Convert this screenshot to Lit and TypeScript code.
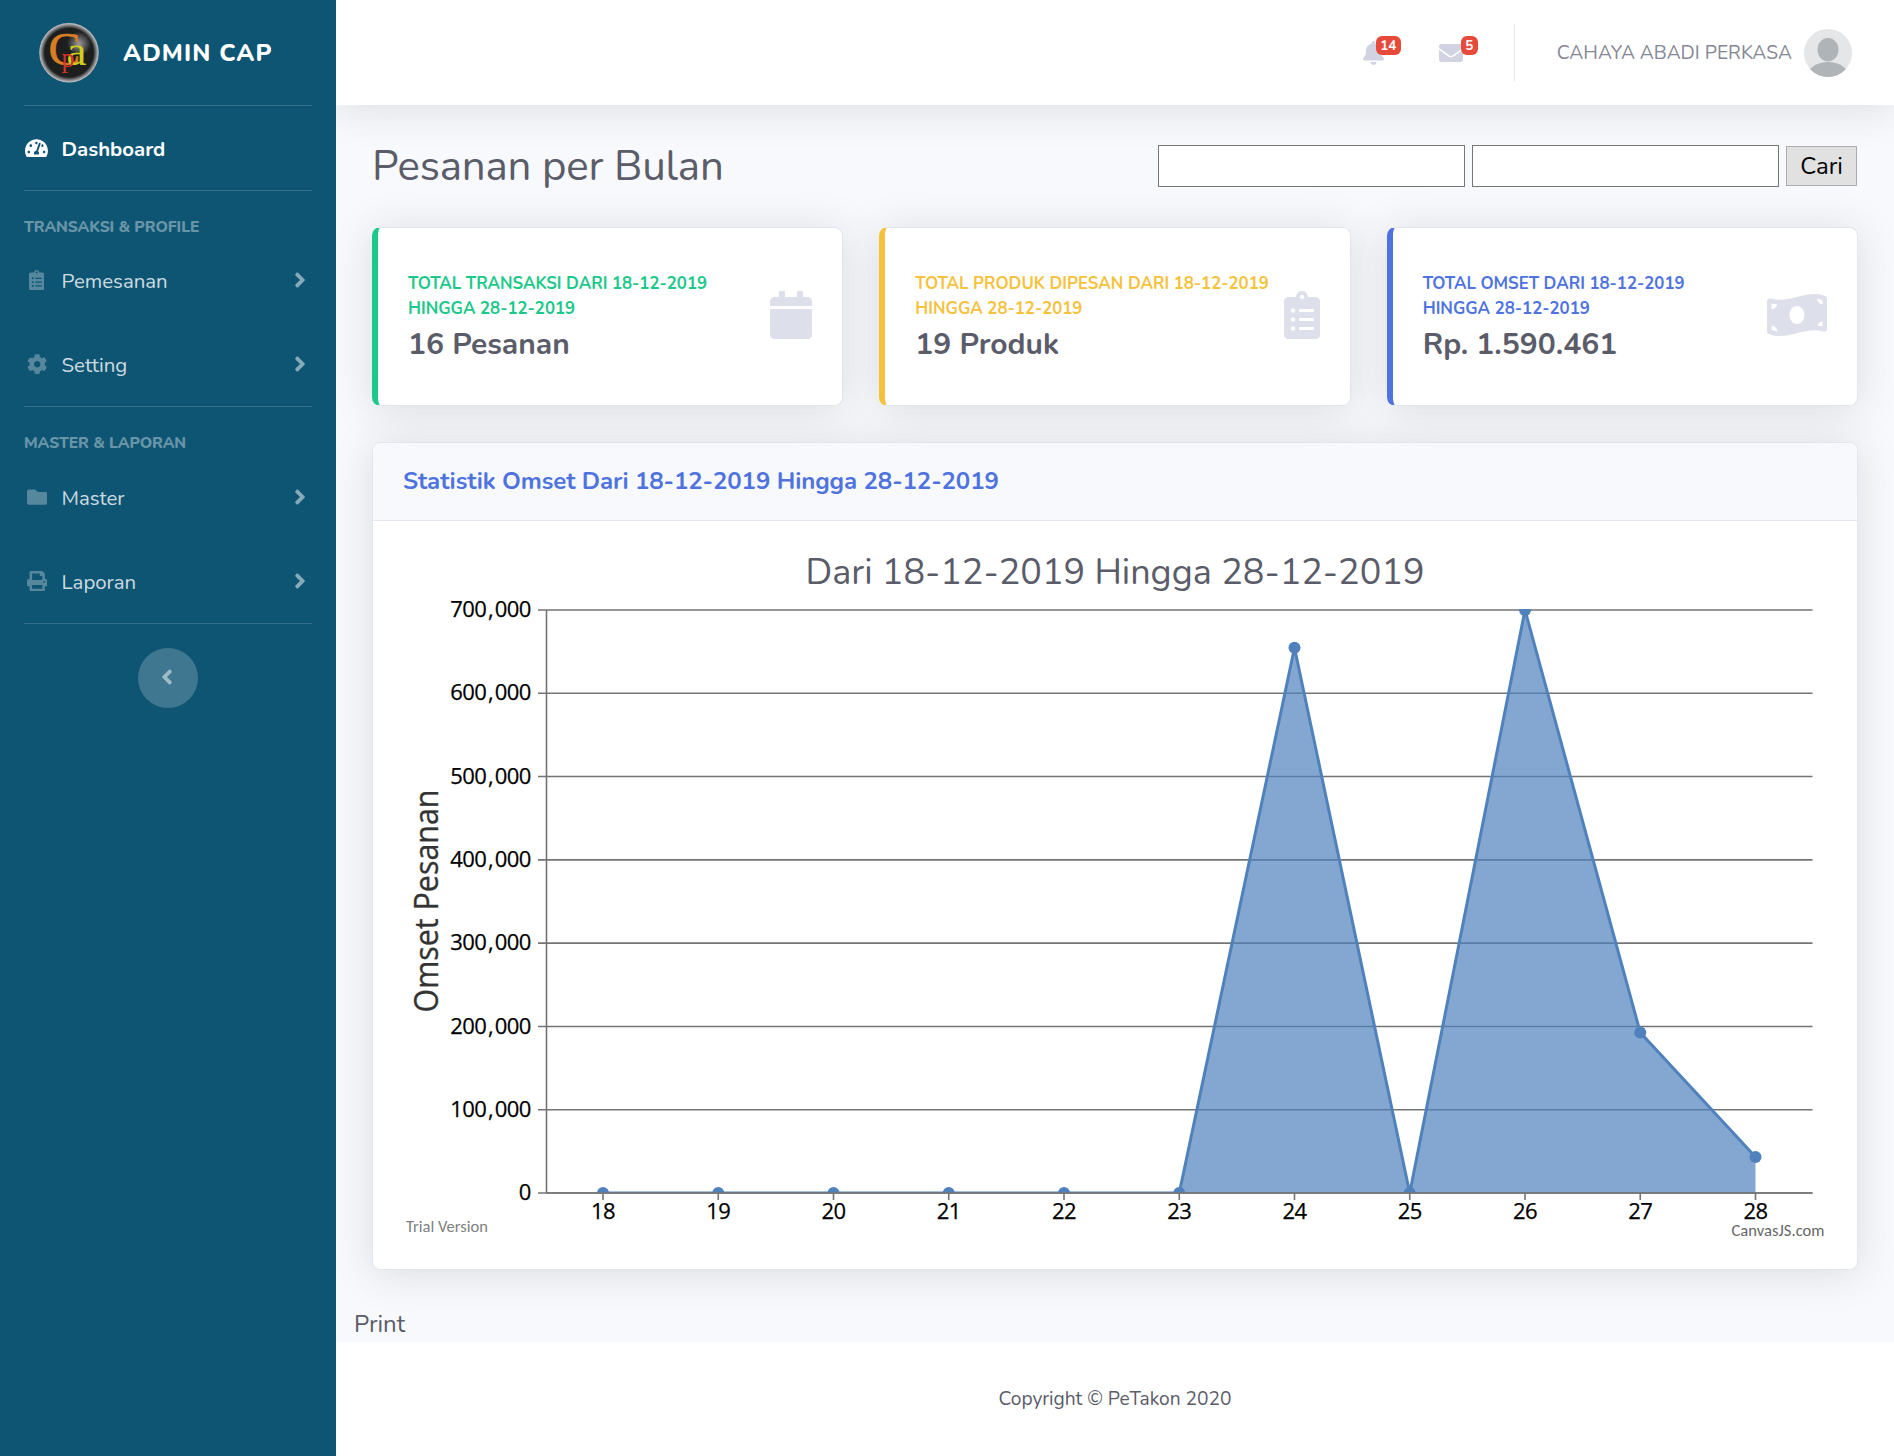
import { LitElement, html, svg, css } from 'lit';
import { customElement, property } from 'lit/decorators.js';
import { classMap } from 'lit/directives/class-map.js';

const ICONS: Record<string, { w: number; d: string }> = {
  gauge: { w: 576, d: 'M288 32C128.94 32 0 160.94 0 320c0 52.8 14.25 102.26 39.06 144.8 5.61 9.62 16.3 15.2 27.44 15.2h443c11.14 0 21.83-5.58 27.44-15.2C561.75 422.26 576 372.8 576 320c0-159.06-128.94-288-288-288zm0 64c14.71 0 26.58 10.13 30.32 23.65-1.11 2.26-2.64 4.23-3.45 6.67l-9.22 27.67c-5.13 3.49-10.97 6.01-17.64 6.01-17.67 0-32-14.33-32-32S270.33 96 288 96zM96 384c-17.67 0-32-14.33-32-32s14.33-32 32-32 32 14.33 32 32-14.33 32-32 32zm48-160c-17.67 0-32-14.33-32-32s14.33-32 32-32 32 14.33 32 32-14.33 32-32 32zm246.77-72.41l-61.33 184C343.13 347.33 352 364.54 352 384c0 11.72-3.38 22.55-8.88 32H232.88c-5.5-9.45-8.88-20.28-8.88-32 0-33.94 26.5-61.43 59.9-63.59l61.34-184.01c4.17-12.56 17.73-19.45 30.36-15.17 12.57 4.19 19.35 17.79 15.17 30.36zm14.66 57.2l15.52-46.55c3.47-1.29 7.13-2.23 11.05-2.23 17.67 0 32 14.33 32 32s-14.33 32-32 32c-11.38-.01-20.89-6.28-26.57-15.22zM480 384c-17.67 0-32-14.33-32-32s14.33-32 32-32 32 14.33 32 32-14.33 32-32 32z' },
  clipboard: { w: 384, d: 'M336 64h-80c0-35.3-28.7-64-64-64s-64 28.7-64 64H48C21.5 64 0 85.5 0 112v352c0 26.5 21.5 48 48 48h288c26.5 0 48-21.5 48-48V112c0-26.5-21.5-48-48-48zM96 424c-13.3 0-24-10.7-24-24s10.7-24 24-24 24 10.7 24 24-10.7 24-24 24zm0-96c-13.3 0-24-10.7-24-24s10.7-24 24-24 24 10.7 24 24-10.7 24-24 24zm0-96c-13.3 0-24-10.7-24-24s10.7-24 24-24 24 10.7 24 24-10.7 24-24 24zm96-192c13.3 0 24 10.7 24 24s-10.7 24-24 24-24-10.7-24-24 10.7-24 24-24zm128 368c0 4.4-3.6 8-8 8H168c-4.4 0-8-3.6-8-8v-16c0-4.4 3.6-8 8-8h144c4.4 0 8 3.6 8 8v16zm0-96c0 4.4-3.6 8-8 8H168c-4.4 0-8-3.6-8-8v-16c0-4.4 3.6-8 8-8h144c4.4 0 8 3.6 8 8v16zm0-96c0 4.4-3.6 8-8 8H168c-4.4 0-8-3.6-8-8v-16c0-4.4 3.6-8 8-8h144c4.4 0 8 3.6 8 8v16z' },
  cog: { w: 512, d: 'M487.4 315.7l-42.6-24.6c4.3-23.2 4.3-47 0-70.2l42.6-24.6c4.9-2.8 7.1-8.6 5.5-14-11.1-35.6-30-67.8-54.7-94.6-3.8-4.1-10-5.1-14.8-2.3L380.8 110c-17.9-15.4-38.5-27.3-60.8-35.1V25.8c0-5.6-3.9-10.5-9.4-11.7-36.7-8.2-74.3-7.8-109.2 0-5.5 1.2-9.4 6.1-9.4 11.7V75c-22.2 7.9-42.8 19.8-60.8 35.1L88.7 85.5c-4.9-2.8-11-1.9-14.8 2.3-24.7 26.7-43.6 58.9-54.7 94.6-1.7 5.4.6 11.2 5.5 14L67.3 221c-4.3 23.2-4.3 47 0 70.2l-42.6 24.6c-4.9 2.8-7.1 8.6-5.5 14 11.1 35.6 30 67.8 54.7 94.6 3.8 4.1 10 5.1 14.8 2.3l42.6-24.6c17.9 15.4 38.5 27.3 60.8 35.1v49.2c0 5.6 3.9 10.5 9.4 11.7 36.7 8.2 74.3 7.8 109.2 0 5.5-1.2 9.4-6.1 9.4-11.7v-49.2c22.2-7.9 42.8-19.8 60.8-35.1l42.6 24.6c4.9 2.8 11 1.9 14.8-2.3 24.7-26.7 43.6-58.9 54.7-94.6 1.5-5.5-.7-11.3-5.6-14.1zM256 336c-44.1 0-80-35.9-80-80s35.9-80 80-80 80 35.9 80 80-35.9 80-80 80z' },
  folder: { w: 512, d: 'M464 128H272l-64-64H48C21.49 64 0 85.49 0 112v288c0 26.51 21.49 48 48 48h416c26.51 0 48-21.49 48-48V176c0-26.51-21.49-48-48-48z' },
  print: { w: 512, d: 'M448 192V77.25c0-8.49-3.37-16.62-9.37-22.63L393.37 9.37c-6-6-14.14-9.37-22.63-9.37H96C78.33 0 64 14.33 64 32v160c-35.35 0-64 28.65-64 64v112c0 8.84 7.16 16 16 16h48v96c0 17.67 14.33 32 32 32h320c17.67 0 32-14.33 32-32v-96h48c8.84 0 16-7.16 16-16V256c0-35.35-28.65-64-64-64zm-64 256H128v-96h256v96zm0-224H128V64h192v48c0 8.84 7.16 16 16 16h48v96zm48 72c-13.25 0-24-10.75-24-24 0-13.26 10.75-24 24-24s24 10.74 24 24c0 13.25-10.75 24-24 24z' },
  right: { w: 256, d: 'M224.3 273l-136 136c-9.4 9.4-24.6 9.4-33.9 0l-22.6-22.6c-9.4-9.4-9.4-24.6 0-33.9l96.4-96.4-96.4-96.4c-9.4-9.4-9.4-24.6 0-33.9L54.3 103c9.4-9.4 24.6-9.4 33.9 0l136 136c9.5 9.4 9.5 24.6.1 34z' },
  left: { w: 256, d: 'M31.7 239l136-136c9.4-9.4 24.6-9.4 33.9 0l22.6 22.6c9.4 9.4 9.4 24.6 0 33.9L127.9 256l96.4 96.4c9.4 9.4 9.4 24.6 0 33.9L201.7 409c-9.4 9.4-24.6 9.4-33.9 0l-136-136c-9.5-9.4-9.5-24.6-.1-34z' },
  bell: { w: 448, d: 'M224 512c35.32 0 63.97-28.65 63.97-64H160.03c0 35.35 28.65 64 63.97 64zm215.39-149.71c-19.32-20.76-55.47-51.99-55.47-154.29 0-77.7-54.48-139.9-127.94-155.16V32c0-17.67-14.32-32-31.98-32s-31.98 14.33-31.98 32v20.84C118.56 68.1 64.08 130.3 64.08 208c0 102.3-36.15 133.53-55.47 154.29-6 6.45-8.66 14.16-8.61 21.71.11 16.4 12.98 32 32.1 32h383.8c19.12 0 32-15.6 32.1-32 .05-7.55-2.61-15.27-8.61-21.71z' },
  envelope: { w: 512, d: 'M502.3 190.8c3.9-3.1 9.7-.2 9.7 4.7V400c0 26.5-21.5 48-48 48H48c-26.5 0-48-21.5-48-48V195.6c0-5 5.7-7.8 9.7-4.7 22.4 17.4 52.1 39.5 154.1 113.6 21.1 15.4 56.7 47.8 92.2 47.6 35.7.3 72-32.8 92.3-47.6 102-74.1 131.6-96.3 154-113.7zM256 320c23.2.4 56.6-29.2 73.4-41.4 132.7-96.3 142.8-104.7 173.4-128.7 5.8-4.5 9.2-11.5 9.2-18.9v-19c0-26.5-21.5-48-48-48H48c-26.5 0-48 21.5-48 48v19c0 7.4 3.4 14.3 9.2 18.9 30.6 23.9 40.7 32.4 173.4 128.7 16.8 12.2 50.2 41.8 73.4 41.4z' },
  calendar: { w: 448, d: 'M12 192h424c6.6 0 12 5.4 12 12v260c0 26.5-21.5 48-48 48H48c-26.5 0-48-21.5-48-48V204c0-6.6 5.4-12 12-12zm436-44v-36c0-26.5-21.5-48-48-48h-48V12c0-6.6-5.4-12-12-12h-40c-6.6 0-12 5.4-12 12v52H160V12c0-6.6-5.4-12-12-12h-40c-6.6 0-12 5.4-12 12v52H48C21.5 64 0 85.5 0 112v36c0 6.6 5.4 12 12 12h424c6.6 0 12-5.4 12-12z' },
  money: { w: 640, d: 'M621.16 54.46C582.37 38.19 543.55 32 504.75 32c-123.17-.01-246.33 62.34-369.5 62.34-30.89 0-61.76-3.92-92.65-13.72-3.47-1.1-6.95-1.62-10.35-1.62C15.04 79 0 92.32 0 110.81v317.26c0 12.63 7.23 24.6 18.84 29.46C57.63 473.81 96.45 480 135.25 480c123.17 0 246.34-62.35 369.51-62.35 30.89 0 61.76 3.92 92.65 13.72 3.47 1.1 6.95 1.62 10.35 1.62 17.21 0 32.25-13.32 32.25-31.81V83.93c-.01-12.64-7.24-24.6-18.85-29.47zM48 132.22c20.12 5.04 41.12 7.57 62.72 8.93C104.84 170.54 79 192.69 48 192.69v-60.47zm0 285v-47.78c34.37 0 62.18 27.27 63.71 61.4-22.53-1.81-43.59-6.31-63.71-13.62zM320 352c-44.19 0-80-42.99-80-96 0-53.02 35.82-96 80-96s80 42.98 80 96c0 53.03-35.83 96-80 96zm272 27.78c-17.52-4.39-35.71-6.85-54.32-8.44 5.87-26.08 27.5-45.88 54.32-49.28v57.72zm0-236.11c-30.89-3.91-54.86-29.7-55.81-61.55 19.54 2.17 38.09 6.23 55.81 12.66v48.89z' },
};

/** Glyph drawn 1em tall in the current colour. */
@customElement('app-icon')
export class AppIcon extends LitElement {
  @property() name = 'cog';

  static styles = css`
    :host { display: block; line-height: 0; }
    .glyph { height: 1em; display: block; fill: currentColor; }
  `;

  render() {
    const icon = ICONS[this.name];
    return html`<svg class="glyph" viewBox="0 0 ${icon.w} 512">${svg`<path d=${icon.d}></path>`}</svg>`;
  }
}

@customElement('side-bar')
export class SideBar extends LitElement {
  static styles = css`
    :host {
      display: flex;
      flex-direction: column;
      width: 336px;
      flex: none;
      background: #0e5573;
      color: #fff;
      font-family: Nunito, Lato, sans-serif;
    }
    .brand { display: flex; align-items: center; height: 105px; padding-left: 39px; gap: 24px; }
    .logo { width: 60px; height: 60px; flex: none; }
    .name { font-size: 24px; font-weight: 800; letter-spacing: 1.1px; }
    .rule { height: 1px; margin: 0 24px; background: rgba(255, 255, 255, 0.15); }
    .link { display: flex; align-items: center; height: 84px; padding: 0 30px 0 24px; font-size: 20.4px; }
    .slot { width: 25.5px; display: flex; justify-content: center; color: rgba(255, 255, 255, 0.3); }
    .label { margin-left: 12px; flex: 1; padding-top: 2px; color: rgba(255, 255, 255, 0.8); }
    .link.active .slot, .link.active .label { color: #fff; }
    .link.active .label { font-weight: 700; }
    .arrow { font-size: 24px; color: rgba(255, 255, 255, 0.5); padding-bottom: 1px; }
    .heading {
      margin-top: 25px;
      padding: 0 24px;
      font-size: 15.6px;
      line-height: 23px;
      font-weight: 800;
      letter-spacing: -0.05px;
      color: rgba(255, 255, 255, 0.4);
    }
    .heading.first { margin-bottom: -1px; }
    .toggle {
      width: 60px;
      height: 60px;
      margin: 24px auto 0;
      border-radius: 50%;
      background: rgba(255, 255, 255, 0.2);
      display: flex;
      align-items: center;
      justify-content: center;
      font-size: 24px;
      color: rgba(255, 255, 255, 0.5);
    }
    .toggle app-icon { padding: 0 2px 2px 0; }
    .mark { font-family: "Liberation Serif", serif; stroke-width: 0.6; }
    .c { fill: #d97d25; stroke: #d97d25; }
    .p { fill: #d8302a; }
    .a { fill: #cfcf1c; }
  `;

  private link(icon: string, label: string, active = false) {
    return html`
      <div class=${classMap({ link: true, active })}>
        <span class="slot"><app-icon name=${icon}></app-icon></span>
        <span class="label">${label}</span>
        ${active ? '' : html`<app-icon class="arrow" name="right"></app-icon>`}
      </div>`;
  }

  render() {
    return html`
      <div class="brand">
        <svg class="logo" viewBox="0 0 60 60">
          <defs>
            <radialGradient id="rim" cx="50%" cy="50%" r="50%">
              <stop offset="0.82" stop-color="#1d1f1e"></stop>
              <stop offset="0.93" stop-color="#8a898c"></stop>
              <stop offset="1" stop-color="#c9c8cb"></stop>
            </radialGradient>
            <radialGradient id="shine" cx="70%" cy="32%" r="24%">
              <stop offset="0" stop-color="#9a9a9a"></stop>
              <stop offset="1" stop-color="#9a9a9a" stop-opacity="0"></stop>
            </radialGradient>
          </defs>
          <circle cx="30" cy="29.7" r="29.7" fill="url(#rim)"></circle>
          <circle cx="30" cy="29.7" r="25" fill="url(#shine)"></circle>
          <text class="mark c" x="9.5" y="42" font-size="46" textLength="32" lengthAdjust="spacingAndGlyphs">C</text>
          <text class="mark a" x="27.5" y="42" font-size="43" textLength="20" lengthAdjust="spacingAndGlyphs">a</text>
          <text class="mark p" x="22.5" y="43.5" font-size="28" textLength="13" lengthAdjust="spacingAndGlyphs">p</text>
        </svg>
        <span class="name">ADMIN CAP</span>
      </div>
      <div class="rule"></div>
      ${this.link('gauge', 'Dashboard', true)}
      <div class="rule"></div>
      <div class="heading first">TRANSAKSI &amp; PROFILE</div>
      ${this.link('clipboard', 'Pemesanan')}
      ${this.link('cog', 'Setting')}
      <div class="rule"></div>
      <div class="heading">MASTER &amp; LAPORAN</div>
      ${this.link('folder', 'Master')}
      ${this.link('print', 'Laporan')}
      <div class="rule"></div>
      <div class="toggle"><app-icon name="left"></app-icon></div>
    `;
  }
}

@customElement('top-bar')
export class TopBar extends LitElement {
  static styles = css`
    :host {
      display: flex;
      align-items: center;
      justify-content: flex-end;
      height: 105px;
      box-sizing: border-box;
      padding-right: 42px;
      background: #fff;
      box-shadow: 0 3.6px 42px rgba(58, 59, 69, 0.15);
      font-family: Nunito, Lato, sans-serif;
      color: #d1d3e2;
      font-size: 24px;
    }
    .alert { position: relative; margin-right: 55px; }
    .alert.mail { margin-right: 51px; }
    .badge {
      position: absolute;
      top: -5px;
      left: 13px;
      height: 19px;
      width: 25px;
      border-radius: 6px;
      background: #e74a3b;
      color: #fff;
      font-size: 13.5px;
      line-height: 19px;
      font-weight: 700;
      text-align: center;
    }
    .mail .badge { left: 22px; width: 17px; }
    .divider { width: 1px; height: 57px; background: #e3e6f0; margin-right: 42px; }
    .user { font-size: 19.2px; color: #858796; margin-right: 12px; }
    .avatar { width: 48px; height: 48px; display: block; }
  `;

  render() {
    return html`
      <div class="alert"><app-icon name="bell"></app-icon><span class="badge">14</span></div>
      <div class="alert mail"><app-icon name="envelope"></app-icon><span class="badge">5</span></div>
      <div class="divider"></div>
      <span class="user">CAHAYA ABADI PERKASA</span>
      <svg class="avatar" viewBox="0 0 48 48">
        <defs><clipPath id="round"><circle cx="24" cy="24" r="24"></circle></clipPath></defs>
        <g clip-path="url(#round)">
          <rect width="48" height="48" fill="#e4e6e8"></rect>
          <ellipse cx="24" cy="20.7" rx="10.5" ry="11.7" fill="#aeb4b8"></ellipse>
          <ellipse cx="24" cy="46" rx="20" ry="13" fill="#aeb4b8"></ellipse>
        </g>
      </svg>
    `;
  }
}

@customElement('stat-card')
export class StatCard extends LitElement {
  @property() tone = 'success';
  @property() title = '';
  @property() range = '';
  @property() value = '';
  @property() icon = '';

  static styles = css`
    :host { display: block; }
    .card {
      display: flex;
      align-items: center;
      justify-content: space-between;
      height: 179px;
      box-sizing: border-box;
      padding: 0 30px;
      background: #fff;
      border: 1px solid #e3e6f0;
      border-left: 6px solid var(--tone);
      border-radius: 8.4px;
      box-shadow: 0 3.6px 42px rgba(58, 59, 69, 0.15);
      font-family: Nunito, Lato, sans-serif;
      font-weight: 700;
    }
    .success { --tone: #1cc88a; }
    .warning { --tone: #f6c23e; }
    .primary { --tone: #4e73df; }
    .caption { color: var(--tone); font-size: 16.8px; line-height: 25.2px; margin-bottom: 6px; padding-top: 1px; white-space: nowrap; }
    .value { color: #5a5c69; font-size: 30px; line-height: 36px; }
    app-icon { font-size: 48px; color: #dddfeb; padding-bottom: 3px; }
  `;

  render() {
    return html`
      <div class="card ${this.tone}">
        <div>
          <div class="caption">${this.title}<br />${this.range}</div>
          <div class="value">${this.value}</div>
        </div>
        <app-icon name=${this.icon}></app-icon>
      </div>`;
  }
}

const SALES = [
  { day: 18, total: 0 }, { day: 19, total: 0 }, { day: 20, total: 0 }, { day: 21, total: 0 },
  { day: 22, total: 0 }, { day: 23, total: 0 }, { day: 24, total: 654600 }, { day: 25, total: 0 },
  { day: 26, total: 699900 }, { day: 27, total: 192600 }, { day: 28, total: 43300 },
];

@customElement('sales-chart')
export class SalesChart extends LitElement {
  static styles = css`
    :host { display: block; }
    .chart { display: block; width: 1424px; height: 688px; overflow: visible; }
    .title { font: 36px Nunito, Lato, sans-serif; fill: #5a5c69; }
    .tick { font: 22px "Trebuchet MS", "Open Sans", sans-serif; letter-spacing: -0.6px; fill: #000; stroke: #000; stroke-width: 0.25; }
    .axis-name { font: 33px "Trebuchet MS", "Open Sans", sans-serif; fill: #333; stroke: #333; stroke-width: 0.3; }
    .note { font: 16.5px Calibri, Carlito, Lato, sans-serif; fill: #808080; }
    .credit { fill: #666; }
    .grid { stroke: #747474; stroke-width: 1.6; }
    .area { fill: #4f81bc; fill-opacity: 0.7; }
    .line { fill: none; stroke: #4f81bc; stroke-width: 3; stroke-linejoin: round; }
    .dot { fill: #4f81bc; }
  `;

  private level(value: number) {
    const [head, tail] = value.toLocaleString('en-US').split(',');
    return tail ? svg`${head}<tspan dx="1.8">,</tspan><tspan dx="1.8">${tail}</tspan>` : head;
  }

  render() {
    const left = 143.5, right = 1409.5, top = 59, bottom = 642;
    const x = (i: number) => 200 + i * 115.25;
    const y = (v: number) => bottom - (v / 700000) * (bottom - top);
    const points = SALES.map((s, i) => `${x(i)},${y(s.total)}`).join(' ');
    const levels = [0, 1, 2, 3, 4, 5, 6, 7].map((n) => n * 100000);
    return html`
      <svg class="chart" viewBox="0 0 1424 688">
        <defs><clipPath id="plot"><rect x=${left} y=${top - 1} width=${right - left} height=${bottom - top + 1}></rect></clipPath></defs>
        <text class="title" x="712" y="32.7" text-anchor="middle">Dari 18-12-2019 Hingga 28-12-2019</text>
        ${levels.map((v) => svg`
          <line class="grid" x1="135" x2=${right} y1=${y(v)} y2=${y(v)}></line>
          <text class="tick" x="127.8" y=${y(v) + 7.2} text-anchor="end">${this.level(v)}</text>`)}
        <line class="grid" x1=${left} x2=${left} y1=${top} y2=${bottom}></line>
        ${SALES.map((s, i) => svg`
          <line class="grid" x1=${x(i)} x2=${x(i)} y1=${bottom} y2=${bottom + 7}></line>
          <text class="tick" x=${x(i)} y=${bottom + 26} text-anchor="middle">${s.day}</text>`)}
        <g clip-path="url(#plot)">
          <polygon class="area" points="${x(0)},${bottom} ${points} ${x(10)},${bottom}"></polygon>
          <polyline class="line" points=${points}></polyline>
          ${SALES.map((s, i) => svg`<circle class="dot" cx=${x(i)} cy=${y(s.total)} r="6"></circle>`)}
        </g>
        <line class="grid" x1=${left} x2=${right} y1=${bottom} y2=${bottom}></line>
        <text class="axis-name" transform="translate(34.5 461.5) rotate(-90)" textLength="223" lengthAdjust="spacingAndGlyphs">Omset Pesanan</text>
        <text class="note" x="3" y="680.5" textLength="82">Trial Version</text>
        <text class="note credit" x="1328.5" y="685" textLength="93">CanvasJS.com</text>
      </svg>`;
  }
}

@customElement('app-root')
export class AppRoot extends LitElement {
  static styles = css`
    :host { display: flex; height: 1456px; font-family: Nunito, Lato, sans-serif; color: #5a5c69; }
    .wrapper { flex: 1; display: flex; flex-direction: column; overflow: hidden; background: #f8f9fc; }
    .content { flex: none; padding: 36px 36px 0; }
    .head { display: flex; align-items: center; justify-content: space-between; height: 50px; margin-bottom: 36px; padding-right: 1px; }
    .title { margin: 0; padding-top: 1px; font-size: 42px; font-weight: 400; line-height: 50px; letter-spacing: -0.17px; }
    .search { display: flex; align-items: center; gap: 7px; }
    .field { width: 307px; height: 42px; box-sizing: border-box; border: 1px solid #767676; background: #fff; padding: 0 3px; border-radius: 0; outline: none; }
    .submit { width: 71px; height: 40px; box-sizing: border-box; padding: 0; border: 1px solid #adadad; border-radius: 0; background: #e1e1e1; color: #000; font: 24px Nunito, Lato, sans-serif; }
    .cards { display: grid; grid-template-columns: repeat(3, 1fr); gap: 36px; margin-bottom: 36px; }
    .panel { background: #fff; border: 1px solid #e3e6f0; border-radius: 8.4px; box-shadow: 0 3.6px 42px rgba(58, 59, 69, 0.15); box-sizing: border-box; height: 828px; }
    .panel-head { display: flex; align-items: center; height: 78px; box-sizing: border-box; padding: 0 30px 1px; background: #f8f9fc; border-bottom: 1px solid #e3e6f0; border-radius: 8px 8px 0 0; color: #4e73df; font-size: 24px; font-weight: 700; letter-spacing: -0.07px; }
    .panel-body { padding: 30px 30px 0; }
    .print { margin: 36px 0 0 -18px; height: 36px; line-height: 36px; font-size: 24px; }
    .footer { flex: 1; display: flex; align-items: center; justify-content: center; background: #fff; font-size: 19.2px; letter-spacing: -0.03px; z-index: 1; }
  `;

  render() {
    const range = 'HINGGA 28-12-2019';
    return html`
      <side-bar></side-bar>
      <div class="wrapper">
        <top-bar></top-bar>
        <div class="content">
          <div class="head">
            <h1 class="title">Pesanan per Bulan</h1>
            <div class="search">
              <input class="field" /><input class="field" /><button class="submit">Cari</button>
            </div>
          </div>
          <div class="cards">
            <stat-card tone="success" title="TOTAL TRANSAKSI DARI 18-12-2019" range=${range} value="16 Pesanan" icon="calendar"></stat-card>
            <stat-card tone="warning" title="TOTAL PRODUK DIPESAN DARI 18-12-2019" range=${range} value="19 Produk" icon="clipboard"></stat-card>
            <stat-card tone="primary" title="TOTAL OMSET DARI 18-12-2019" range=${range} value="Rp. 1.590.461" icon="money"></stat-card>
          </div>
          <div class="panel">
            <div class="panel-head">Statistik Omset Dari 18-12-2019 Hingga 28-12-2019</div>
            <div class="panel-body"><sales-chart></sales-chart></div>
          </div>
          <div class="print">Print</div>
        </div>
        <div class="footer">Copyright © PeTakon 2020</div>
      </div>
    `;
  }
}
